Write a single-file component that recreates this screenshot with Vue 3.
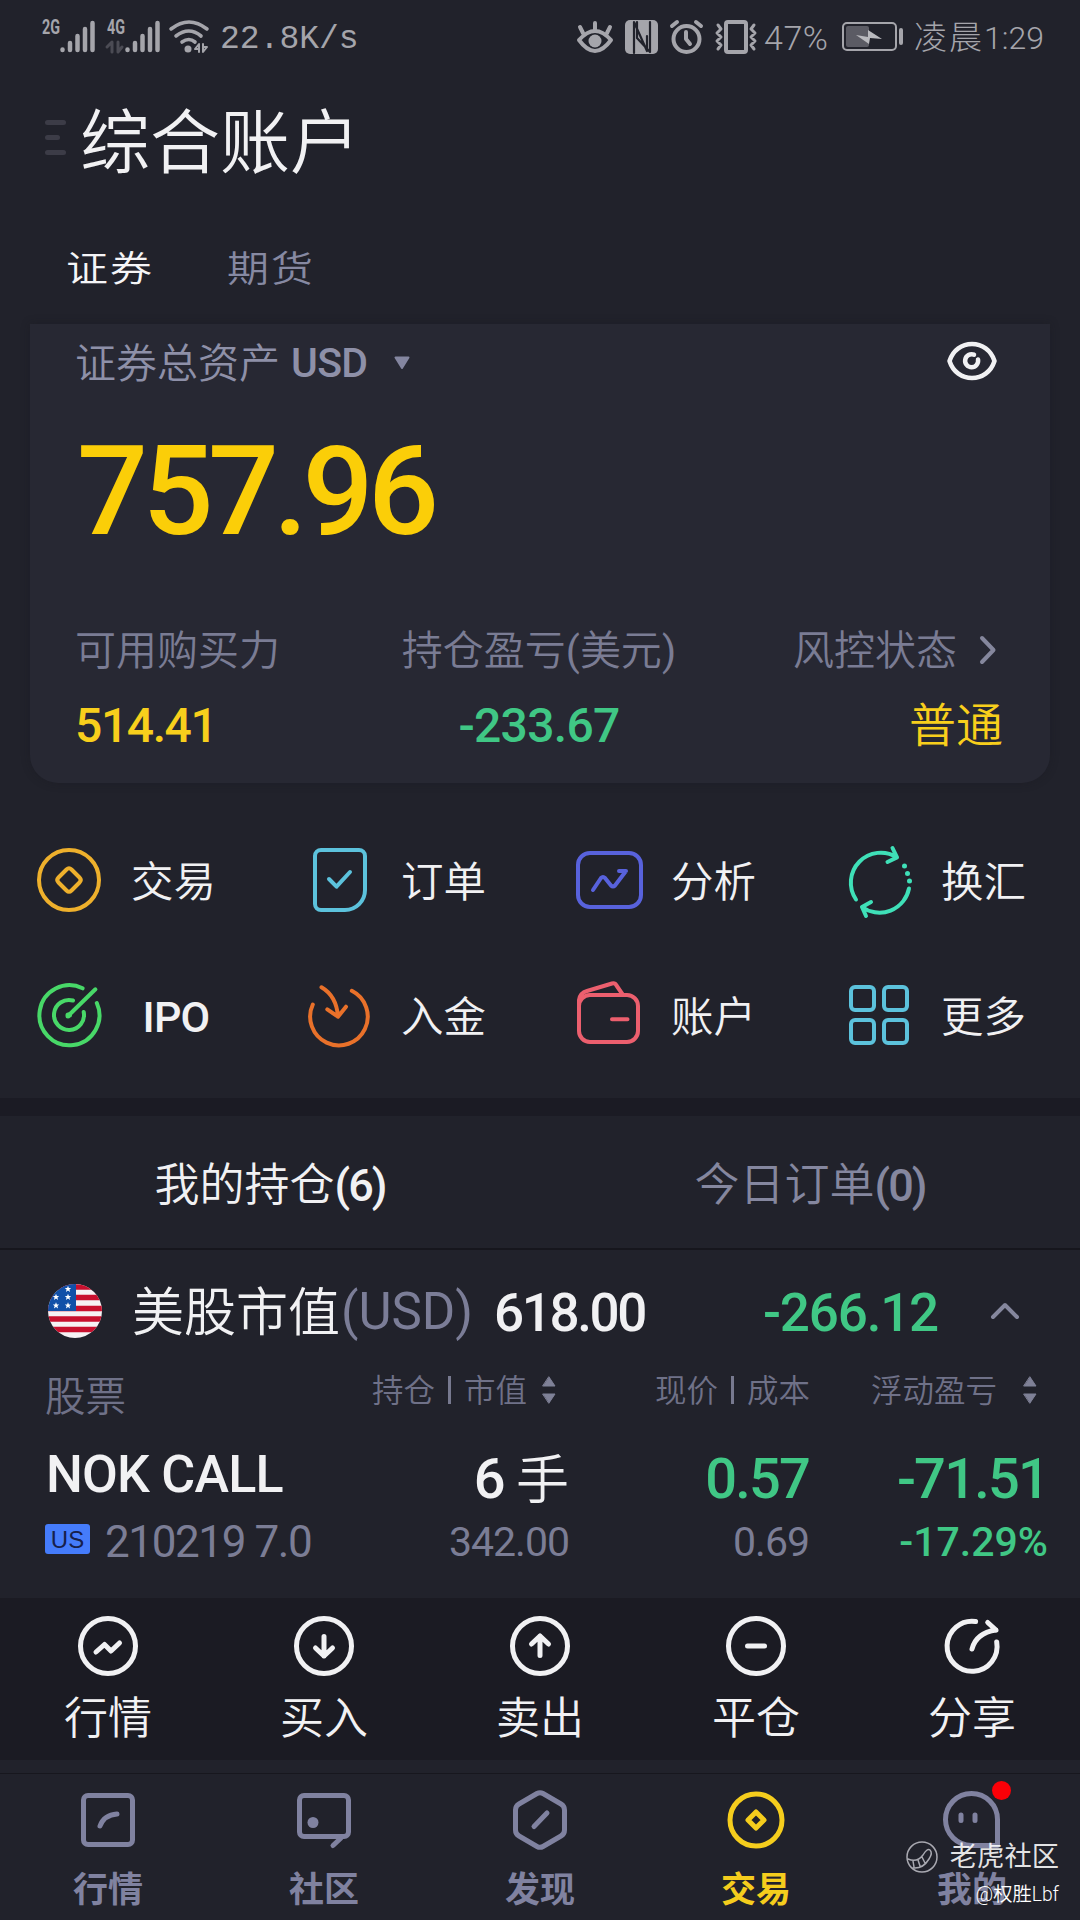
<template>
  <div class="screen">
    <header class="status-bar">
      <div class="status-left">
        <svg class="signal" viewBox="0 0 54 36">
          <text class="net-label" x="0" y="16" textLength="18" lengthAdjust="spacingAndGlyphs">2G</text>
          <path d="M20.5 31.5v.5M28 25v7M35.5 18v14M43 11v21M50.5 5v27" />
        </svg>
        <svg class="signal second" viewBox="0 0 54 36">
          <text class="net-label" x="0" y="16" textLength="18" lengthAdjust="spacingAndGlyphs">4G</text>
          <path class="faint" d="M5 34V24L0 29M11 24v10l4-5" />
          <path d="M20.5 31.5v.5M28 25v7M35.5 18v14M43 11v21M50.5 5v27" />
        </svg>
        <svg class="wifi" viewBox="0 0 40 36">
          <path d="M2 11Q20-3 38 11M7 18Q20 8 32 18M13 24Q20 19 26 24" />
          <circle cx="19" cy="31" r="3.5" />
          <path class="thin" d="M30 34V26L26 31H30M34 26V34L38 29H34" />
        </svg>
        <span class="speed">22.8K/s</span>
      </div>
      <div class="status-right">
        <svg class="st-eye" viewBox="0 0 36 34">
          <path d="M2 20Q18 2 34 20Q18 42 2 20ZM18 3V9M3 7L6 13M33 7L30 13" />
          <circle cx="18" cy="21" r="6.5" />
        </svg>
        <svg class="st-nfc" viewBox="0 0 33 34">
          <rect width="33" height="34" rx="5" />
          <path d="M9 33V2L22 31V16M12 2V18L25 32V2" />
        </svg>
        <svg class="st-alarm" viewBox="0 0 33 34">
          <circle cx="16.5" cy="19" r="13" />
          <path d="M16 12V19L20 24M2 6L7 2M31 6L26 2" />
        </svg>
        <svg class="st-vibrate" viewBox="0 0 42 34">
          <rect x="11" y="2" width="20" height="30" rx="2" />
          <path d="M3 5L6 9L2 13L6 17L2 21L6 25L3 29M39 5L36 9L40 13L36 17L40 21L36 25L39 29" />
        </svg>
        <span class="percent">47%</span>
        <svg class="st-battery" viewBox="0 0 62 30">
          <rect class="frame" x="1" y="1" width="53" height="27" rx="4" />
          <rect class="level" x="4" y="4" width="23" height="21" rx="2" />
          <path class="bolt" d="M14 13L26 15L26 8L40 17L28 16L27 22Z" />
          <rect class="nub" x="57" y="6" width="4" height="17" rx="2" />
        </svg>
        <span class="clock"><span class="period">凌晨</span>1:29</span>
      </div>
    </header>

    <div class="title-bar">
      <div class="menu-lines"><i></i><i></i><i></i></div>
      <h1 class="title">综合账户</h1>
    </div>

    <nav class="account-tabs">
      <span class="account-tab active">证券</span>
      <span class="account-tab">期货</span>
    </nav>

    <section class="asset-card">
      <div class="asset-head">
        <span class="asset-label">证券总资产</span>
        <span class="asset-currency">USD</span>
        <svg class="dropdown" viewBox="0 0 18 16"><path d="M2.5 2.500H15.500L9 13Z" /></svg>
        <svg class="eye" viewBox="0 0 50 40">
          <path d="M2.5 20C6 9 15 3 25 3S44 9 47.5 20C44 31 35 37 25 37S6 31 2.5 20Z" />
          <path d="M27 13.7A6.5 6.5 0 1 0 31 18.5" />
        </svg>
      </div>
      <div class="asset-total">757.96</div>
      <div class="asset-stats">
        <div class="stat">
          <span class="stat-label">可用购买力</span>
          <span class="stat-value yellow">514.41</span>
        </div>
        <div class="stat center">
          <span class="stat-label">持仓盈亏<b class="paren">(</b>美元<b class="paren">)</b></span>
          <span class="stat-value green">-233.67</span>
        </div>
        <div class="stat right">
          <span class="stat-label">风控状态
            <svg class="chevron" viewBox="0 0 18 30"><path d="M3 3L14.5 15L3 27" /></svg>
          </span>
          <span class="stat-value yellow cjk">普通</span>
        </div>
      </div>
    </section>

    <section class="shortcuts">
      <div v-for="item in shortcuts" :key="item.label" class="shortcut">
        <svg :class="['shortcut-icon', item.tone]" viewBox="0 0 72 72">
          <path v-for="(d, i) in item.paths" :key="i" :d="d" />
          <path v-if="item.dots" class="dots" :d="item.dots" />
        </svg>
        <span :class="['shortcut-label', { latin: item.latin }]">{{ item.label }}</span>
      </div>
    </section>

    <section class="position-tabs">
      <span class="position-tab active">我的持仓<b>(6)</b></span>
      <span class="position-tab">今日订单<b>(0)</b></span>
    </section>

    <section class="market">
      <div class="market-head">
        <svg class="flag" viewBox="0 0 54 54">
          <defs>
            <clipPath id="flag-clip"><circle cx="27" cy="27" r="27" /></clipPath>
          </defs>
          <g clip-path="url(#flag-clip)">
            <rect width="54" height="54" fill="#f6f2f4" />
            <path d="M0 3H54M0 13.5H54M0 24.5H54M0 35H54M0 45.5H54" stroke="#c8102e" stroke-width="5.5" />
            <rect width="28" height="27" fill="#1150a8" />
            <path v-for="s in stars" :key="s" :d="s" fill="#fff" />
          </g>
        </svg>
        <span class="market-name">美股市值</span>
        <span class="market-currency">(USD)</span>
        <span class="market-value">618.00</span>
        <span class="market-change">-266.12</span>
        <svg class="caret" viewBox="0 0 30 18"><path d="M3 15L15 3L27 15" /></svg>
      </div>

      <div class="table-row table-head">
        <span class="col-name">股票</span>
        <span class="col-qty">持仓<i class="bar"></i>市值
          <svg class="sort" viewBox="0 0 16 30"><path d="M8 2L14 11H2ZM8 28L14 19H2Z" /></svg>
        </span>
        <span class="col-price">现价<i class="bar"></i>成本</span>
        <span class="col-profit">浮动盈亏
          <svg class="sort" viewBox="0 0 16 30"><path d="M8 2L14 11H2ZM8 28L14 19H2Z" /></svg>
        </span>
      </div>

      <div class="table-row table-main">
        <span class="col-name">NOK CALL</span>
        <span class="col-qty">6 <em>手</em></span>
        <span class="col-price green">0.57</span>
        <span class="col-profit green">-71.51</span>
      </div>
      <div class="table-row table-sub">
        <span class="col-name"><i class="badge">US</i>210219 7.0</span>
        <span class="col-qty">342.00</span>
        <span class="col-price">0.69</span>
        <span class="col-profit green">-17.29%</span>
      </div>
    </section>

    <section class="actions">
      <div v-for="item in actions" :key="item.label" class="action">
        <svg class="action-icon" viewBox="0 0 60 60">
          <path v-for="(d, i) in item.paths" :key="i" :d="d" />
        </svg>
        <span class="action-label">{{ item.label }}</span>
      </div>
    </section>

    <nav class="bottom-nav">
      <div v-for="item in navItems" :key="item.label" :class="['nav-item', { active: item.active }]">
        <svg class="nav-icon" viewBox="0 0 60 60">
          <path v-for="(d, i) in item.paths" :key="i" :d="d" />
          <circle v-if="item.dot" class="solid" cx="19" cy="32.5" r="5.5" />
        </svg>
        <span class="nav-label">{{ item.label }}</span>
        <i v-if="item.unread" class="unread"></i>
      </div>
    </nav>

    <div class="watermark">
      <div class="watermark-brand">
        <svg class="watermark-logo" viewBox="0 0 32 32">
          <circle cx="16" cy="16" r="15" />
          <path d="M2 18Q11 22 17 14Q21 7 24 9Q27 12 23 18Q17 28 7 27M7 20L8 26M12 19L14 25M16 16L19 22" />
        </svg>
        <span>老虎社区</span>
      </div>
      <div class="watermark-user">@权胜Lbf</div>
    </div>
  </div>
</template>

<script setup>
const shortcuts = [
  {
    label: '交易',
    tone: 'gold',
    paths: [
      'M36 6a30 30 0 1 1 0 60a30 30 0 1 1 0-60z',
      'M33.5 25.5q2.5-2.5 5 0l8 8q2.5 2.5 0 5l-8 8q-2.5 2.5-5 0l-8-8q-2.5-2.5 0-5z',
    ],
  },
  {
    label: '订单',
    tone: 'sky',
    paths: [
      'M18 6H56a6 6 0 0 1 6 6V46a20 20 0 0 1-20 20H18a6 6 0 0 1-6-6V12a6 6 0 0 1 6-6z',
      'M26 35L33.5 42.7L47 28',
    ],
  },
  {
    label: '分析',
    tone: 'indigo',
    paths: [
      'M17 9H56a12 12 0 0 1 12 12V51a12 12 0 0 1-12 12H17a12 12 0 0 1-12-12V21a12 12 0 0 1 12-12z',
      'M20 46L28 34q2-2 4 0L38 41.5q2 2 4 0L53 27M46 27H53',
    ],
  },
  {
    label: '换汇',
    tone: 'teal',
    paths: [
      'M13 55.5A30 30 0 0 1 54 13.4M49.5 4L54 13.4L44.5 18',
      'M66 44.5A30 30 0 0 1 19 63M28 58L19 63L23 72',
    ],
    dots: 'M61.5 22v.01M64.5 29.5v.01M66.5 37v.01',
  },
  {
    label: 'IPO',
    tone: 'lime',
    latin: true,
    paths: [
      'M49.6 9.3A30 30 0 1 0 63.8 24',
      'M40 21.5A15 15 0 1 0 50.7 33',
      'M36 36L62.4 10.3',
    ],
    dots: 'M36 36v.01M36.5 36v.01M35 36v1',
  },
  {
    label: '入金',
    tone: 'orange',
    paths: [
      'M48.8 11.8A28.8 28.8 0 1 1 9.8 25.5',
      'M18.5 8.3Q33.5 17 35 37.7M24.3 30.3L35 37.7L43 27.7',
    ],
  },
  {
    label: '账户',
    tone: 'rose',
    paths: [
      'M17 16H54a11 11 0 0 1 11 11V52a11 11 0 0 1-11 11H17a11 11 0 0 1-11-11V27a11 11 0 0 1 11-11z',
      'M6 26V21Q7 14 14 12L39 4.5q3-.8 4.5 2L50 16M39 40.3H54.5',
    ],
  },
  {
    label: '更多',
    tone: 'sky',
    paths: [
      'M12 8H27a4 4 0 0 1 4 4V27a4 4 0 0 1-4 4H12a4 4 0 0 1-4-4V12a4 4 0 0 1 4-4z',
      'M45 8H60a4 4 0 0 1 4 4V27a4 4 0 0 1-4 4H45a4 4 0 0 1-4-4V12a4 4 0 0 1 4-4z',
      'M12 41H27a4 4 0 0 1 4 4V60a4 4 0 0 1-4 4H12a4 4 0 0 1-4-4V45a4 4 0 0 1 4-4z',
      'M45 41H60a4 4 0 0 1 4 4V60a4 4 0 0 1-4 4H45a4 4 0 0 1-4-4V45a4 4 0 0 1 4-4z',
    ],
  },
]

const ring = 'M30 2.5a27.5 27.5 0 1 1 0 55a27.5 27.5 0 1 1 0-55z'

const actions = [
  { label: '行情', paths: [ring, 'M18 36L26.5 28.5L33 35L41.5 27'] },
  { label: '买入', paths: [ring, 'M30 20.5V40M21.5 32L30 40L38.5 32'] },
  { label: '卖出', paths: [ring, 'M30 39.5V20M21.5 28L30 20L38.5 28'] },
  { label: '平仓', paths: [ring, 'M21.5 30H38.5'] },
  {
    label: '分享',
    paths: ['M33.6 5.6A25 25 0 1 0 54.7 26', 'M30 33Q34 17 54 14M45.7 6.5L54 14'],
  },
]

const navItems = [
  {
    label: '行情',
    paths: [
      'M10 5.5H50a4.5 4.5 0 0 1 4.5 4.5V50a4.5 4.5 0 0 1-4.5 4.5H10a4.5 4.5 0 0 1-4.5-4.5V10a4.5 4.5 0 0 1 4.5-4.5z',
      'M22 36Q26 25 39 24',
    ],
  },
  {
    label: '社区',
    dot: true,
    paths: [
      'M10 5.5H50a4.5 4.5 0 0 1 4.5 4.5V42a4.5 4.5 0 0 1-4.5 4.5H10a4.5 4.5 0 0 1-4.5-4.5V10a4.5 4.5 0 0 1 4.5-4.5z',
      'M47 48L39 55.5',
    ],
  },
  {
    label: '发现',
    paths: [
      'M27 3.5q3-1.7 6 0l18 10.5q3.5 2 3.5 6v20q0 4-3.5 6l-18 10.5q-3 1.7-6 0l-18-10.5q-3.5-2-3.5-6v-20q0-4 3.5-6z',
      'M24 36.5L37 23',
    ],
  },
  {
    label: '交易',
    active: true,
    paths: ['M30 4a26 26 0 1 1 0 52a26 26 0 1 1 0-52z', 'M30 22L38 30L30 38L22 30Z'],
  },
  {
    label: '我的',
    unread: true,
    paths: ['M55.5 55.5H29.5A26 26 0 1 1 55.5 29.5Z', 'M19 25V30.5M33 25V30.5'],
  },
]

// five-pointed stars in the flag's canton
const star = (x, y) =>
  `M${x} ${y - 3.2}l.9 2.2h2.3l-1.8 1.5l.7 2.4l-2.1-1.4l-2.1 1.4l.7-2.4l-1.8-1.5h2.3z`
const stars = [star(20, 5), star(8, 13), star(20, 13), star(8, 21.5), star(20, 21.5)]
</script>

<style>
body {
  margin: 0;
  background: #21222b;
}
</style>

<style scoped>
.screen {
  position: relative;
  width: 1080px;
  height: 1920px;
  overflow: hidden;
  background: #21222b;
  color: #f1f1f3;
  font-family: Roboto, 'Noto Sans CJK SC', sans-serif;
  font-weight: 350;
}

svg {
  display: block;
  flex: none;
  overflow: visible;
  fill: none;
  stroke-linecap: round;
  stroke-linejoin: round;
}

i,
em {
  font-style: normal;
}

b {
  font-weight: 500;
}

.green {
  color: #40c785;
}

.yellow {
  color: #f8cf1c;
}

/* Status bar */
.status-bar {
  display: flex;
  justify-content: space-between;
  height: 90px;
  padding: 18px 36px 0 42px;
  box-sizing: border-box;
  color: #a5a5ab;
}

.status-left,
.status-right {
  display: flex;
  height: 36px;
}

.status-bar svg {
  stroke: #a5a5ab;
}

.signal {
  width: 54px;
  height: 36px;
  stroke-width: 4.5;
}

.signal.second {
  margin-left: 11px;
}

.status-bar .net-label {
  fill: #a5a5ab;
  stroke: none;
  font-size: 21px;
  font-weight: 700;
}

.signal .faint {
  stroke: #4b4b54;
  stroke-width: 3;
}

.wifi {
  width: 40px;
  height: 36px;
  margin-left: 8px;
  stroke-width: 3.6;
}

.wifi circle {
  fill: #a5a5ab;
  stroke: none;
}

.wifi .thin {
  stroke-width: 2;
}

.speed {
  margin-left: 11px;
  font-family: 'Liberation Mono', monospace;
  font-size: 33px;
  line-height: 43px;
}

.st-eye {
  width: 36px;
  height: 34px;
  margin-top: 2px;
  stroke-width: 4;
}

.st-eye circle {
  fill: #a5a5ab;
  stroke: none;
}

.st-nfc {
  width: 33px;
  height: 34px;
  margin: 2px 0 0 12px;
}

.st-nfc rect {
  fill: #a5a5ab;
  stroke: none;
}

.st-nfc path {
  stroke: #21222b;
  stroke-width: 2.2;
}

.st-alarm {
  width: 33px;
  height: 34px;
  margin: 2px 0 0 12px;
  stroke-width: 4;
}

.st-vibrate {
  width: 42px;
  height: 34px;
  margin: 2px 0 0 12px;
  stroke-width: 4;
}

.st-vibrate path {
  stroke-width: 3;
}

.percent {
  width: 85px;
  padding-left: 7px;
  box-sizing: border-box;
  font-size: 34px;
  font-weight: 300;
  line-height: 41px;
  letter-spacing: 0.5px;
}

.st-battery {
  width: 62px;
  height: 30px;
  margin-top: 4px;
}

.st-battery .frame {
  stroke-width: 2;
}

.st-battery .level {
  fill: #5b5b64;
  stroke: none;
}

.st-battery .bolt {
  fill: #b9b9be;
  stroke: none;
}

.st-battery .nub {
  fill: #a5a5ab;
  stroke: none;
}

.clock {
  margin-left: 10px;
  font-size: 32px;
  font-weight: 300;
  line-height: 40px;
}

.period {
  font-size: 33px;
  letter-spacing: 2px;
}

/* Title */
.title-bar {
  display: flex;
  align-items: center;
  height: 100px;
  padding-left: 45px;
}

.menu-lines {
  display: flex;
  flex-direction: column;
  gap: 10px;
  width: 35px;
  margin-top: -5px;
}

.menu-lines i {
  width: 21px;
  height: 5px;
  border-radius: 3px;
  background: #3c3c47;
}

.menu-lines i:nth-child(2) {
  width: 15px;
}

.title {
  margin: 0;
  padding-top: 7px;
  font-size: 70px;
  line-height: 100px;
  font-weight: 350;
}

.account-tabs {
  display: flex;
  gap: 73px;
  height: 134px;
  padding: 50px 0 0 66px;
  box-sizing: border-box;
}

.account-tab {
  height: 60px;
  color: #8689a2;
  font-size: 42px;
  line-height: 60px;
  letter-spacing: 2px;
  transform: scaleY(0.86);
}

.account-tab.active {
  color: #f5f5f7;
}

/* Asset card */
.asset-card {
  height: 459px;
  margin: 0 30px;
  padding: 8px 47px 0 45px;
  box-sizing: border-box;
  border-radius: 0 0 28px 28px;
  background: #272833;
  box-shadow: 0 0 8px rgba(24, 24, 32, 0.35);
}

.asset-head {
  display: flex;
  align-items: center;
  height: 60px;
  color: #8e90a8;
  font-size: 41px;
  line-height: 60px;
}

.asset-label {
  padding-top: 3px;
}

.asset-currency {
  margin: 1px 26px 0 11px;
  font-size: 41px;
  font-weight: 500;
  letter-spacing: -0.7px;
}

.dropdown {
  width: 18px;
  height: 16px;
  margin-top: 2px;
  fill: #8486a0;
  stroke: #8486a0;
  stroke-width: 2;
}

.eye {
  width: 50px;
  height: 40px;
  margin: -2px 6px 0 auto;
  stroke: #f1f1f3;
  stroke-width: 4.5;
}

.asset-total {
  height: 234px;
  padding-left: 2px;
  color: #fbce08;
  font-size: 125px;
  font-weight: 500;
  line-height: 200px;
  letter-spacing: -5.6px;
}

.asset-stats {
  display: flex;
  justify-content: space-between;
}

.stat {
  display: flex;
  flex-direction: column;
  width: 300px;
}

.stat.center {
  align-items: center;
}

.stat.right {
  align-items: flex-end;
}

.stat-label {
  display: flex;
  align-items: center;
  height: 50px;
  color: #7a7c94;
  font-size: 41px;
  line-height: 50px;
}

.paren {
  font-weight: 400;
}

.stat.right .stat-label {
  padding-right: 6px;
}

.chevron {
  width: 18px;
  height: 30px;
  margin-left: 22px;
  margin-top: -2px;
  stroke: #85879d;
  stroke-width: 4;
}

.stat-value {
  height: 60px;
  margin-top: 20px;
  font-size: 48px;
  font-weight: 500;
  line-height: 60px;
  letter-spacing: -1.4px;
}

.stat.center .stat-value {
  letter-spacing: -0.7px;
}

.stat-value.cjk {
  font-size: 47px;
  font-weight: 350;
  letter-spacing: 0;
}

/* Shortcuts */
.shortcuts {
  display: grid;
  grid-template-columns: repeat(4, 270px);
  grid-auto-rows: 135px;
  height: 315px;
  padding-top: 29px;
  box-sizing: border-box;
}

.shortcut {
  display: flex;
  align-items: center;
  padding-left: 33px;
}

.shortcut-icon {
  width: 72px;
  height: 72px;
  stroke: currentColor;
  stroke-width: 4;
}

.shortcut-icon .dots {
  stroke-width: 5;
}

.shortcut-label {
  width: 90px;
  margin-left: 26px;
  padding-top: 7px;
  font-size: 42.5px;
  line-height: 60px;
}

.shortcut-label.latin {
  padding-top: 4px;
  text-align: center;
  font-size: 43px;
  font-weight: 500;
  letter-spacing: -0.8px;
}

.gold { color: #eeb02c; }
.sky { color: #5cc2dc; }
.indigo { color: #5862dc; }
.teal { color: #3fe0b8; }
.lime { color: #48d868; }
.orange { color: #e9712a; }
.rose { color: #ec5f6e; }

/* Position tabs */
.position-tabs {
  display: flex;
  height: 152px;
  border-top: 18px solid #1b1b24;
  border-bottom: 2px solid #16161d;
  box-sizing: border-box;
}

.position-tab {
  width: 540px;
  text-align: center;
  color: #85879f;
  font-size: 45px;
  line-height: 139px;
}

.position-tab b {
  letter-spacing: -2px;
}

.position-tab.active {
  color: #f1f1f3;
}

/* Market */
.market {
  height: 348px;
  box-sizing: border-box;
}

.market-head {
  display: flex;
  align-items: center;
  height: 122px;
  padding: 0 60px 0 48px;
  box-sizing: border-box;
  font-size: 52px;
  line-height: 122px;
}

.flag {
  width: 54px;
  height: 54px;
}

.market-name {
  margin-left: 30px;
  padding-top: 5px;
}

.market-currency {
  width: 133px;
  margin-left: 1px;
  padding-top: 2px;
  color: #7b7d97;
  font-size: 51px;
  font-weight: 400;
}

.market-value {
  margin-left: 20px;
  padding-top: 3px;
  font-size: 53px;
  font-weight: 500;
  letter-spacing: -2.4px;
}

.market-change {
  margin-left: auto;
  padding-top: 3px;
  color: #40c785;
  font-size: 53px;
  font-weight: 500;
  letter-spacing: -1.2px;
}

.caret {
  width: 30px;
  height: 18px;
  margin-left: 52px;
  stroke: #85879d;
  stroke-width: 4;
}

.table-row {
  display: flex;
  align-items: center;
}

.table-row span {
  display: flex;
  align-items: center;
  flex: none;
  box-sizing: border-box;
  white-space: nowrap;
}

.col-name {
  width: 315px;
  padding-left: 45px;
}

.col-qty {
  justify-content: flex-end;
  width: 254px;
}

.col-price {
  justify-content: flex-end;
  width: 240px;
}

.col-profit {
  justify-content: flex-end;
  width: 237px;
}

.table-head {
  height: 40px;
  color: #6f7188;
  font-size: 31.5px;
  line-height: 40px;
}

.table-head .col-name {
  padding-top: 10px;
  font-size: 40.5px;
}

.table-head .col-qty {
  width: 242px;
}

.table-head .col-price {
  width: 253px;
}

.table-head .col-profit {
  width: 228px;
}

.bar {
  width: 3px;
  height: 28px;
  margin: -4px 13px 0;
  background: #77798f;
}

.sort {
  width: 16px;
  height: 30px;
  margin: -5px 0 0 14px;
  fill: #7f8197;
  stroke: #7f8197;
  stroke-width: 1;
}

.col-profit .sort {
  margin-left: 25px;
}

.table-main {
  height: 76px;
  margin-top: 29px;
  font-size: 56px;
  font-weight: 500;
  line-height: 76px;
  letter-spacing: -1.8px;
}

.table-main .col-name {
  padding-left: 46px;
  padding-bottom: 8px;
  font-size: 52px;
  letter-spacing: -0.8px;
}

.table-main .col-qty {
  white-space: pre;
}

.table-main .col-profit {
  width: 239px;
}

.table-main em {
  padding-top: 4px;
  font-size: 53px;
  font-weight: 350;
  letter-spacing: 0;
}

.table-sub {
  height: 50px;
  color: #7b7d95;
  font-size: 41px;
  font-weight: 400;
  line-height: 50px;
  letter-spacing: -1px;
}

.table-sub .col-name {
  font-size: 44px;
  letter-spacing: -1.4px;
}

.table-sub .col-profit {
  width: 239px;
  font-weight: 500;
  letter-spacing: 0;
}

.badge {
  flex: none;
  width: 45px;
  height: 30px;
  margin: -7px 15px 0 0;
  border-radius: 3px;
  background: #457cfb;
  color: #17204a;
  font-family: 'Liberation Sans', sans-serif;
  font-size: 24px;
  line-height: 31px;
  letter-spacing: 0;
  text-align: center;
}

/* Position actions */
.actions {
  display: flex;
  height: 162px;
  background: #1b1b23;
}

.action {
  display: flex;
  flex-direction: column;
  align-items: center;
  width: 216px;
  padding-top: 18px;
}

.action-icon {
  width: 60px;
  height: 60px;
  stroke: #f1f1f3;
  stroke-width: 5;
}

.action-label {
  margin-top: 13px;
  font-size: 44px;
  line-height: 60px;
}

/* Bottom navigation */
.bottom-nav {
  display: flex;
  height: 147px;
  margin-top: 13px;
  border-top: 1px solid #17171e;
}

.nav-item {
  position: relative;
  display: flex;
  flex-direction: column;
  align-items: center;
  width: 216px;
  padding-top: 16px;
  color: #8082a0;
}

.nav-item.active {
  color: #f5cd1d;
}

.nav-icon {
  width: 60px;
  height: 60px;
  stroke: currentColor;
  stroke-width: 5;
}

.nav-icon .solid {
  fill: currentColor;
  stroke: none;
}

.nav-label {
  margin-top: 21px;
  font-size: 35px;
  font-weight: 700;
  line-height: 40px;
}

.unread {
  position: absolute;
  top: 7px;
  right: 69px;
  width: 19px;
  height: 19px;
  border-radius: 50%;
  background: #fb0007;
}

/* Watermark */
.watermark {
  position: absolute;
  right: 21px;
  bottom: 11px;
  display: flex;
  flex-direction: column;
  align-items: flex-end;
  color: #fff;
}

.watermark-brand {
  display: flex;
  align-items: center;
  gap: 12px;
  height: 36px;
  color: rgba(255, 255, 255, 0.88);
  font-size: 27.3px;
  font-weight: 400;
  line-height: 36px;
}

.watermark-logo {
  width: 32px;
  height: 32px;
  stroke: #a9a9b1;
  stroke-width: 1.5;
}

.watermark-user {
  margin-top: 6px;
  font-size: 19.3px;
  line-height: 28px;
}
</style>
